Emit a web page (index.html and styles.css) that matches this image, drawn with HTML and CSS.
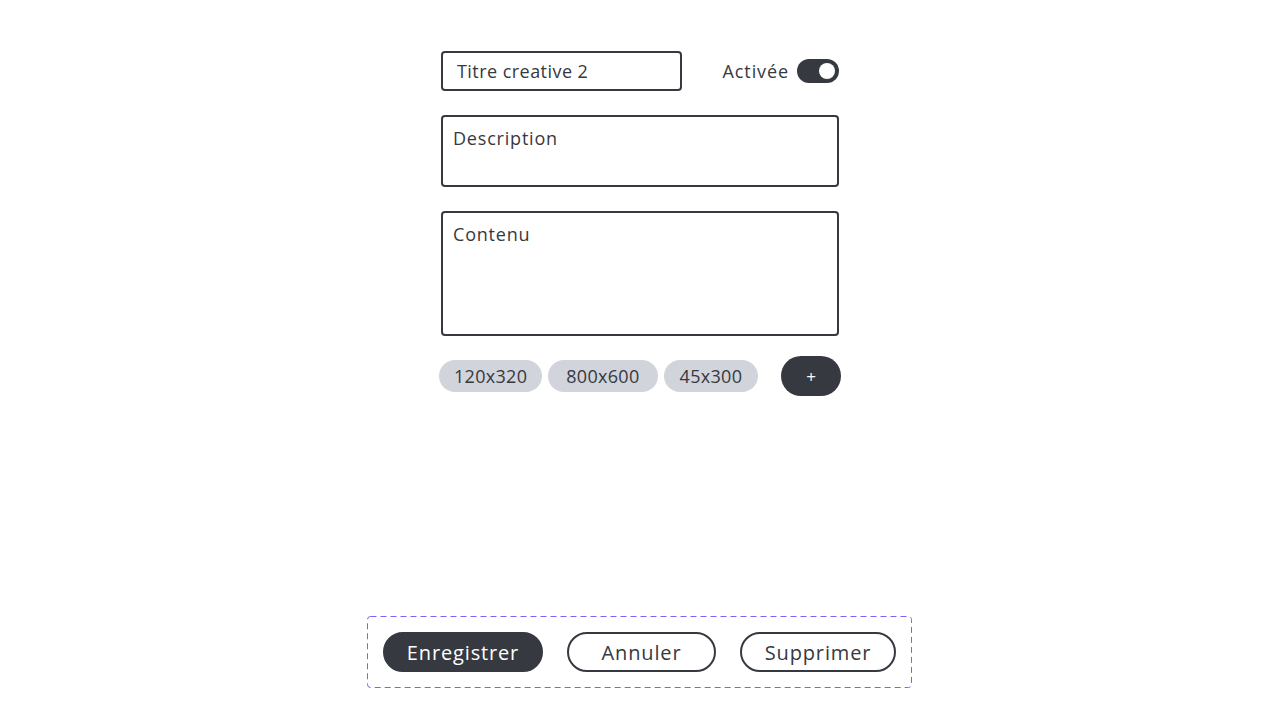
FILE: index.html
```html
<!DOCTYPE html>
<html lang="fr">
<head>
<meta charset="utf-8">
<title>Creative</title>
<link rel="stylesheet" href="styles.css">
</head>
<body>
<main class="form">
  <div class="row-top">
    <div class="field field-title">Titre creative 2</div>
    <div class="switch-wrap">
      <span class="switch-label">Activée</span>
      <span class="switch"><span class="knob"></span></span>
    </div>
  </div>
  <div class="field area area-desc">Description</div>
  <div class="field area area-content">Contenu</div>
  <div class="tags">
    <span class="tag">120x320</span>
    <span class="tag">800x600</span>
    <span class="tag">45x300</span>
    <button class="add">+</button>
  </div>
</main>
<footer class="actions">
  <svg class="dash" aria-hidden="true"><rect class="dash-rect" x="0.5" y="0.5" rx="3" ry="3"></rect></svg>
  <button class="btn btn-primary">Enregistrer</button>
  <button class="btn btn-outline btn-cancel">Annuler</button>
  <button class="btn btn-outline btn-delete">Supprimer</button>
</footer>
</body>
</html>
```
FILE: styles.css
```css
* { box-sizing: border-box; }
html, body {
  margin: 0;
  height: 100%;
  background: #ffffff;
}
body {
  font-family: "Open Sans", "Liberation Sans", sans-serif;
  color: #363940;
  position: relative;
}
.form {
  width: 402px;
  margin: 51px auto 0;
  display: flex;
  flex-direction: column;
  gap: 24px;
}
.row-top {
  display: flex;
  justify-content: space-between;
  align-items: center;
  padding: 0 2px;
}
.field {
  border: 2px solid #363940;
  border-radius: 4px;
  font-size: 18px;
  line-height: 22px;
  letter-spacing: 0.8px;
  color: #363940;
}
.field-title {
  width: 241px;
  height: 40px;
  padding: 7px 14px;
  letter-spacing: 0.45px;
}
.switch-wrap {
  display: flex;
  align-items: center;
  gap: 8px;
  font-size: 18px;
  letter-spacing: 0.9px;
}
.switch {
  width: 42px;
  height: 24px;
  border-radius: 12px;
  background: #363940;
  display: flex;
  align-items: center;
  justify-content: flex-end;
  padding-right: 4px;
}
.knob {
  width: 16px;
  height: 16px;
  border-radius: 50%;
  background: #ffffff;
}
.area {
  margin: 0 2px;
  padding: 10px 10px;
}
.area-desc { height: 72px; }
.area-content { height: 125px; }
.tags {
  display: flex;
  align-items: center;
  gap: 6px;
  margin-top: -4px;
}
.tag {
  height: 32px;
  padding: 0 15px;
  border-radius: 16px;
  background: #d1d4db;
  font-size: 18px;
  line-height: 32px;
  letter-spacing: 0.3px;
  color: #363940;
}
.tag:nth-child(2) { padding: 0 18px; }
.tag:nth-child(3) { padding: 0 16px; }
.add {
  margin-left: auto;
  width: 60px;
  height: 40px;
  border: none;
  border-radius: 20px;
  background: #363940;
  color: #ffffff;
  font-family: inherit;
  font-size: 17px;
  padding: 0;
}
.actions {
  position: absolute;
  left: 0;
  right: 0;
  bottom: 32px;
  width: max-content;
  margin: 0 auto;
  display: flex;
  gap: 24px;
  padding: 16px 17px 16px 16px;
}
.dash {
  position: absolute;
  inset: 0;
  width: 100%;
  height: 100%;
  pointer-events: none;
}
.dash-rect {
  width: calc(100% - 2px);
  height: calc(100% - 1px);
  fill: none;
  stroke: #7b61ff;
  stroke-width: 1;
  stroke-dasharray: 6 4;
}
.btn {
  height: 40px;
  border-radius: 20px;
  font-family: inherit;
  font-size: 20px;
  letter-spacing: 0.85px;
  padding: 0;
  color: #363940;
}
.btn-primary {
  width: 160px;
  background: #363940;
  border: 2px solid #363940;
  color: #ffffff;
}
.btn-outline {
  background: #ffffff;
  border: 2px solid #363940;
}
.btn-cancel { width: 149px; }
.btn-delete { width: 156px; }
```
